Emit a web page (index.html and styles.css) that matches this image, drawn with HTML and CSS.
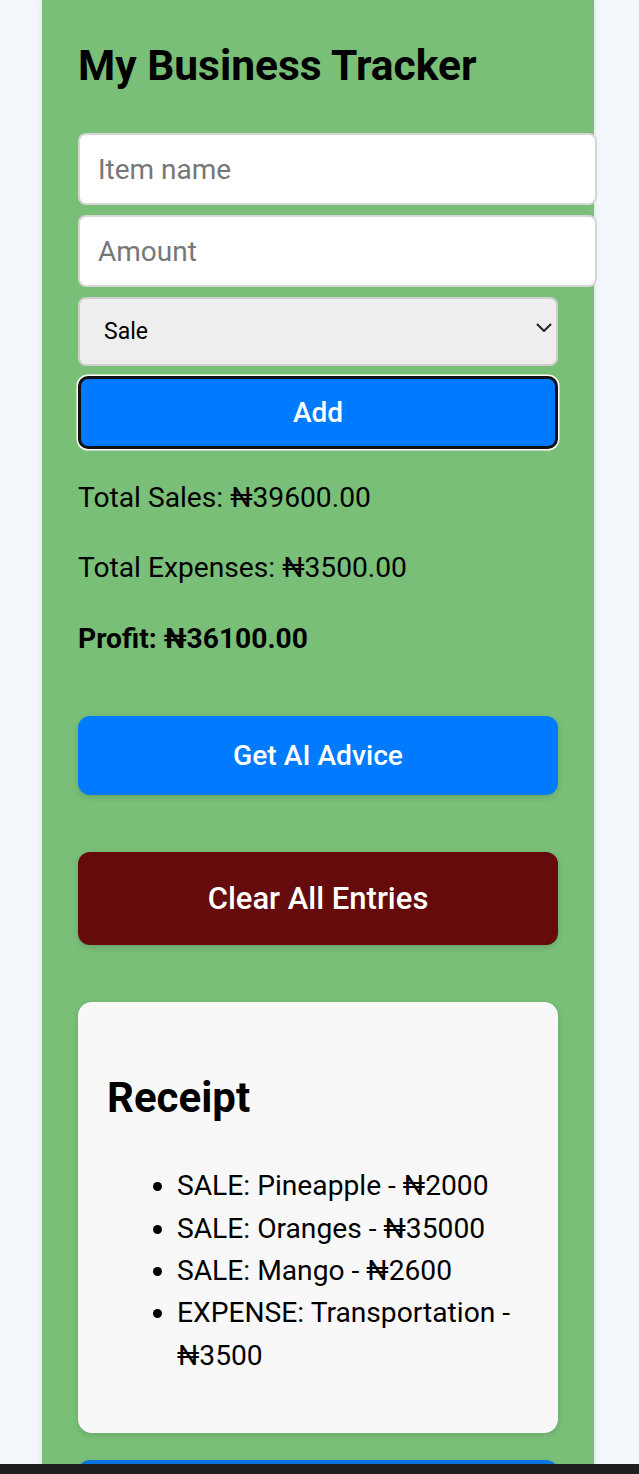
FILE: index.html
```html
<!DOCTYPE html>
<html lang="en">
<head>
<meta charset="utf-8">
<title>My Business Tracker</title>
<link rel="stylesheet" href="styles.css">
</head>
<body>
<main class="app">
  <h1 class="title">My Business Tracker</h1>
  <div class="form">
    <input class="field" type="text" placeholder="Item name">
    <input class="field" type="text" placeholder="Amount">
    <div class="select-wrap">
      <select class="type-select">
        <option>Sale</option>
        <option>Expense</option>
      </select>
      <svg class="select-chevron" width="16" height="10" viewBox="0 0 16 10" aria-hidden="true">
        <path d="M1.5 1.5 L8 8 L14.5 1.5" fill="none" stroke="#222" stroke-width="2" stroke-linecap="round" stroke-linejoin="round"/>
      </svg>
    </div>
    <button class="btn btn-add">Add</button>
  </div>
  <div class="totals">
    <p class="total">Total Sales: ₦39600.00</p>
    <p class="total">Total Expenses: ₦3500.00</p>
    <p class="total total-profit">Profit: ₦36100.00</p>
  </div>
  <button class="btn btn-action btn-advice">Get AI Advice</button>
  <button class="btn btn-action btn-clear">Clear All Entries</button>
  <section class="receipt">
    <h2 class="receipt-title">Receipt</h2>
    <ul class="receipt-list">
      <li>SALE: Pineapple - ₦2000</li>
      <li>SALE: Oranges - ₦35000</li>
      <li>SALE: Mango - ₦2600</li>
      <li>EXPENSE: Transportation - ₦3500</li>
    </ul>
  </section>
  <button class="btn btn-action btn-download" aria-label="Download Receipt"></button>
</main>
<div class="system-bar"></div>
</body>
</html>
```

FILE: styles.css
```css
* { box-sizing: border-box; }

html, body {
  margin: 0;
  padding: 0;
}

body {
  background: #f3f6fb;
  font-family: Roboto, "Liberation Sans", Arial, sans-serif;
  color: #000;
  line-height: 1.6;
}

.app {
  width: 552px;
  margin-left: 42px;
  background: #79bf78;
  padding: 0 36px 60px;
  box-shadow: 0 0 4px rgba(0, 0, 0, 0.12);
  min-height: 1600px;
}

.title {
  margin: 0;
  padding-top: 34px;
  font-size: 42.5px;
  font-weight: 700;
  line-height: 64px;
}

.form {
  display: flex;
  flex-direction: column;
  align-items: flex-start;
  gap: 10px;
  margin-top: 35px;
}

.field {
  width: 519px;
  height: 72px;
  padding: 0 19px 0 18px;
  font-family: inherit;
  font-size: 28px;
  border: 2px solid #d6d6d6;
  border-radius: 8px;
  background: #fff;
  color: #000;
  outline: none;
}

.field::placeholder {
  color: #777;
}

.select-wrap {
  position: relative;
  width: 480px;
  height: 69px;
}

.type-select {
  width: 100%;
  height: 100%;
  padding: 0 40px 0 24px;
  font-family: inherit;
  font-size: 23px;
  color: #000;
  background-color: #eeeeee;
  border: 2px solid #cfcfcf;
  border-radius: 8px;
  appearance: none;
  -webkit-appearance: none;
}

.select-chevron {
  position: absolute;
  right: 6px;
  top: 26px;
  pointer-events: none;
}

.btn {
  display: block;
  width: 480px;
  font-family: inherit;
  color: #fff;
  cursor: pointer;
}

.btn-add {
  height: 73px;
  background: #007bff;
  border: 3px solid #111;
  border-radius: 10px;
  box-shadow: 0 0 0 1.5px #fff;
  font-size: 28px;
  font-weight: 500;
}

.totals {
  padding-top: 18px;
}

.total {
  margin: 10px 0 28px;
  font-size: 28.2px;
  line-height: 42.4px;
}

.total-profit {
  font-weight: 700;
  margin-bottom: 0;
}

.btn-action {
  border: none;
  border-radius: 12px;
  font-weight: 500;
  box-shadow: 0 2px 6px rgba(0, 0, 0, 0.15);
}

.btn-advice {
  margin-top: 56px;
  height: 79px;
  background: #007bff;
  font-size: 28.2px;
}

.btn-clear {
  margin-top: 57px;
  height: 93px;
  background: #650b0b;
  font-size: 31px;
}

.receipt {
  margin-top: 57px;
  width: 480px;
  background: #f8f8f9;
  border-radius: 14px;
  padding: 31px 29px 29px;
  box-shadow: 0 2px 6px rgba(0, 0, 0, 0.12);
}

.receipt-title {
  margin: 33px 0 35px;
  font-size: 42px;
  font-weight: 700;
  line-height: 64px;
}

.receipt-list {
  margin: 0 0 27px;
  padding-left: 70px;
  font-size: 28.2px;
  line-height: 42.4px;
}

.btn-download {
  margin-top: 27px;
  height: 79px;
  background: #0a74e0;
}

.system-bar {
  position: fixed;
  left: 0;
  right: 0;
  bottom: 0;
  height: 10px;
  background: #1f1f1f;
}
```
